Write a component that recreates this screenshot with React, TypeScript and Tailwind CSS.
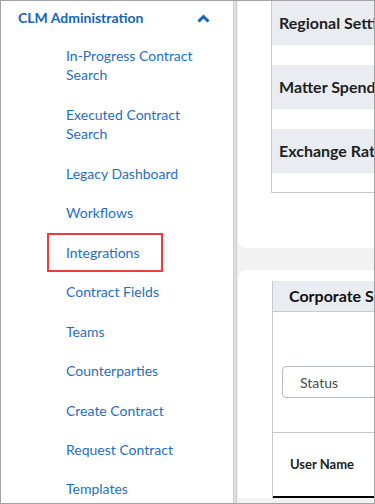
import type { ReactNode } from 'react';

const navItems = [
  'In-Progress Contract Search',
  'Executed Contract Search',
  'Legacy Dashboard',
  'Workflows',
  'Integrations',
  'Contract Fields',
  'Teams',
  'Counterparties',
  'Create Contract',
  'Request Contract',
  'Templates',
];

const settingRows = ['Regional Settings', 'Matter Spend Settings', 'Exchange Rates'];

function Card({ children, className = '' }: { children: ReactNode; className?: string }) {
  return <div className={`w-[420px] bg-white ${className}`}>{children}</div>;
}

export default function App() {
  return (
    <div
      className="flex h-[504px] w-[375px] overflow-hidden border border-[#a3a3a3] bg-white"
      style={{ fontFamily: 'Lato, "Open Sans", sans-serif' }}
    >
      {/* Sidebar */}
      <aside className="w-[232px] shrink-0 bg-white pt-[7px]">
        <div className="mb-[8px] flex items-center justify-between pl-[17px] pr-[23px]">
          <span className="text-[14px] font-bold leading-[20px] text-[#1565b8]">CLM Administration</span>
          <svg width="13" height="9" viewBox="0 0 13 9" className="mt-[1px]">
            <path d="M1.5 7.5 L6.5 2.5 L11.5 7.5" fill="none" stroke="#1565b8" strokeWidth="3" />
          </svg>
        </div>
        <ul>
          {navItems.map((item) => (
            <li
              key={item}
              className="relative py-[10px] pl-[65px] pr-[22px] text-[14px] leading-[19.45px] text-[#1f6fc1]"
            >
              {item}
              {item === 'Integrations' && (
                <div className="absolute inset-y-0 left-[46px] w-[116px] border-2 border-[#ef3b3b]" />
              )}
            </li>
          ))}
        </ul>
      </aside>

      {/* Divider */}
      <div className="w-[4px] shrink-0 border-x border-[#cfcfcf] bg-[#e0e0e0]" />

      {/* Main */}
      <main className="flex-1 overflow-hidden bg-[#f2f2f2] pl-[1px]">
        <Card className="rounded-bl-lg pb-[55px] pl-[33px]">
          <div className="border-b border-l border-[#c9c9c9] pb-[19px]">
            {settingRows.map((row, i) => (
              <div
                key={row}
                className={`flex h-[44px] items-center bg-[#e9edf1] pl-[7px] text-[16px] font-bold text-[#1e1e1e] ${
                  i > 0 ? 'mt-[20px]' : ''
                }`}
              >
                <span className="whitespace-nowrap">{row}</span>
              </div>
            ))}
          </div>
        </Card>

        <Card className="mt-[22px] rounded-tl-lg pl-[34px] pt-[11px]">
          <div className="border-l border-[#c9c9c9]">
            <div className="flex h-[31px] items-center border-b border-[#c9c9c9] bg-[#e9edf1] pl-[16px] text-[16px] font-bold text-[#111]">
              <span className="whitespace-nowrap">Corporate Settings</span>
            </div>
            <div className="h-[121px] border-b border-[#c9c9c9] pl-[9px] pt-[54px]">
              <div className="flex h-[32px] w-[200px] items-center rounded-[4px] border border-[#b5bcc6] pl-[17px] text-[14px] text-[#4a4a4a]">
                Status
              </div>
            </div>
            <div className="flex h-[63px] items-center pl-[17px] text-[13px] font-bold text-[#222]">User Name</div>
            <div className="h-[2px] bg-black" />
          </div>
        </Card>
      </main>
    </div>
  );
}
